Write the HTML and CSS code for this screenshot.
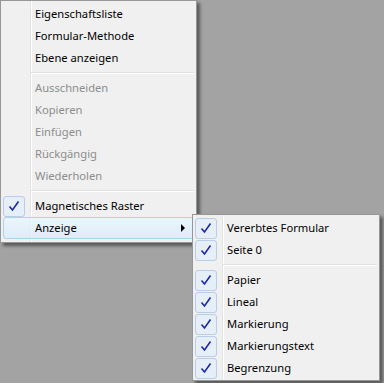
FILE: index.html
```html
<!DOCTYPE html>
<html lang="de">
<head>
    <meta charset="UTF-8">
    <title>Kontextmenü</title>
    <link rel="stylesheet" href="styles.css">
</head>
<body>
    <div class="menu main-menu">
        <div class="item"><span class="check"></span><span class="label">Eigenschaftsliste</span></div>
        <div class="item"><span class="check"></span><span class="label">Formular-Methode</span></div>
        <div class="item"><span class="check"></span><span class="label">Ebene anzeigen</span></div>
        <div class="separator"></div>
        <div class="item disabled"><span class="check"></span><span class="label">Ausschneiden</span></div>
        <div class="item disabled"><span class="check"></span><span class="label">Kopieren</span></div>
        <div class="item disabled"><span class="check"></span><span class="label">Einfügen</span></div>
        <div class="item disabled"><span class="check"></span><span class="label">Rückgängig</span></div>
        <div class="item disabled"><span class="check"></span><span class="label">Wiederholen</span></div>
        <div class="separator"></div>
        <div class="item checked"><span class="check"><svg viewBox="0 0 20 20" width="20" height="20"><path d="M5.5 10.5 L8.5 14 L14.5 5.5"/></svg></span><span class="label">Magnetisches Raster</span></div>
        <div class="item active"><span class="check"></span><span class="label">Anzeige</span><span class="arrow"></span></div>
    </div>

    <div class="menu sub-menu">
        <div class="item checked"><span class="check"><svg viewBox="0 0 20 20" width="20" height="20"><path d="M5.5 10.5 L8.5 14 L14.5 5.5"/></svg></span><span class="label">Vererbtes Formular</span></div>
        <div class="item checked"><span class="check"><svg viewBox="0 0 20 20" width="20" height="20"><path d="M5.5 10.5 L8.5 14 L14.5 5.5"/></svg></span><span class="label">Seite 0</span></div>
        <div class="separator"></div>
        <div class="item checked"><span class="check"><svg viewBox="0 0 20 20" width="20" height="20"><path d="M5.5 10.5 L8.5 14 L14.5 5.5"/></svg></span><span class="label">Papier</span></div>
        <div class="item checked"><span class="check"><svg viewBox="0 0 20 20" width="20" height="20"><path d="M5.5 10.5 L8.5 14 L14.5 5.5"/></svg></span><span class="label">Lineal</span></div>
        <div class="item checked"><span class="check"><svg viewBox="0 0 20 20" width="20" height="20"><path d="M5.5 10.5 L8.5 14 L14.5 5.5"/></svg></span><span class="label">Markierung</span></div>
        <div class="item checked"><span class="check"><svg viewBox="0 0 20 20" width="20" height="20"><path d="M5.5 10.5 L8.5 14 L14.5 5.5"/></svg></span><span class="label">Markierungstext</span></div>
        <div class="item checked"><span class="check"><svg viewBox="0 0 20 20" width="20" height="20"><path d="M5.5 10.5 L8.5 14 L14.5 5.5"/></svg></span><span class="label">Begrenzung</span></div>
    </div>
</body>
</html>
```

FILE: styles.css
```css
body {
    margin: 0;
    background: #a3a3a3;
    font-family: "Segoe UI", "Noto Sans", Arial, sans-serif;
    font-size: 11.2px;
    width: 384px;
    height: 383px;
    overflow: hidden;
    position: relative;
}

.menu {
    box-sizing: border-box;
    border: 1px solid #979797;
    padding: 2px;
    background-color: #f0f0f0;
    background-image: linear-gradient(to right, transparent 29px, #e2e3e3 29px, #e2e3e3 30px, #ffffff 30px, #ffffff 31px, transparent 31px);
    box-shadow: 3px 3px 3px rgba(0, 0, 0, 0.45);
}

.main-menu {
    width: 197px;
    height: 243px;
}

.sub-menu {
    position: absolute;
    left: 192px;
    top: 214px;
    width: 188px;
    height: 167px;
}

.item {
    display: flex;
    align-items: center;
    height: 22px;
    color: #000;
    position: relative;
    box-sizing: border-box;
}

.item.disabled {
    color: #8d8d8d;
}

.check {
    box-sizing: border-box;
    width: 22px;
    height: 21px;
    flex: none;
    display: flex;
    align-items: center;
    justify-content: center;
    border-radius: 3px;
}

.check svg {
    fill: none;
    stroke: #1c2aa6;
    stroke-width: 1.6;
    stroke-linejoin: miter;
}

.item.checked .check {
    background: #e6eef7;
    border: 1px solid #b8cde6;
}

.label {
    margin-left: 10px;
    padding-bottom: 2px;
    flex: 1;
    white-space: nowrap;
}

.item.active {
    background: linear-gradient(rgba(236, 245, 252, 0.85), rgba(218, 236, 250, 0.85));
    border: 1px solid #a9d4ec;
    border-radius: 3px;
}

.item.active .check {
    width: 21px;
    height: 20px;
}

.arrow {
    width: 0;
    height: 0;
    border-top: 4px solid transparent;
    border-bottom: 4px solid transparent;
    border-left: 4px solid #000;
    margin-right: 8px;
}

.separator {
    height: 8px;
    margin-left: 28px;
    background: linear-gradient(to bottom, transparent 3px, #e0e0e0 3px, #e0e0e0 4px, #ffffff 4px, #ffffff 5px, transparent 5px);
}
```
